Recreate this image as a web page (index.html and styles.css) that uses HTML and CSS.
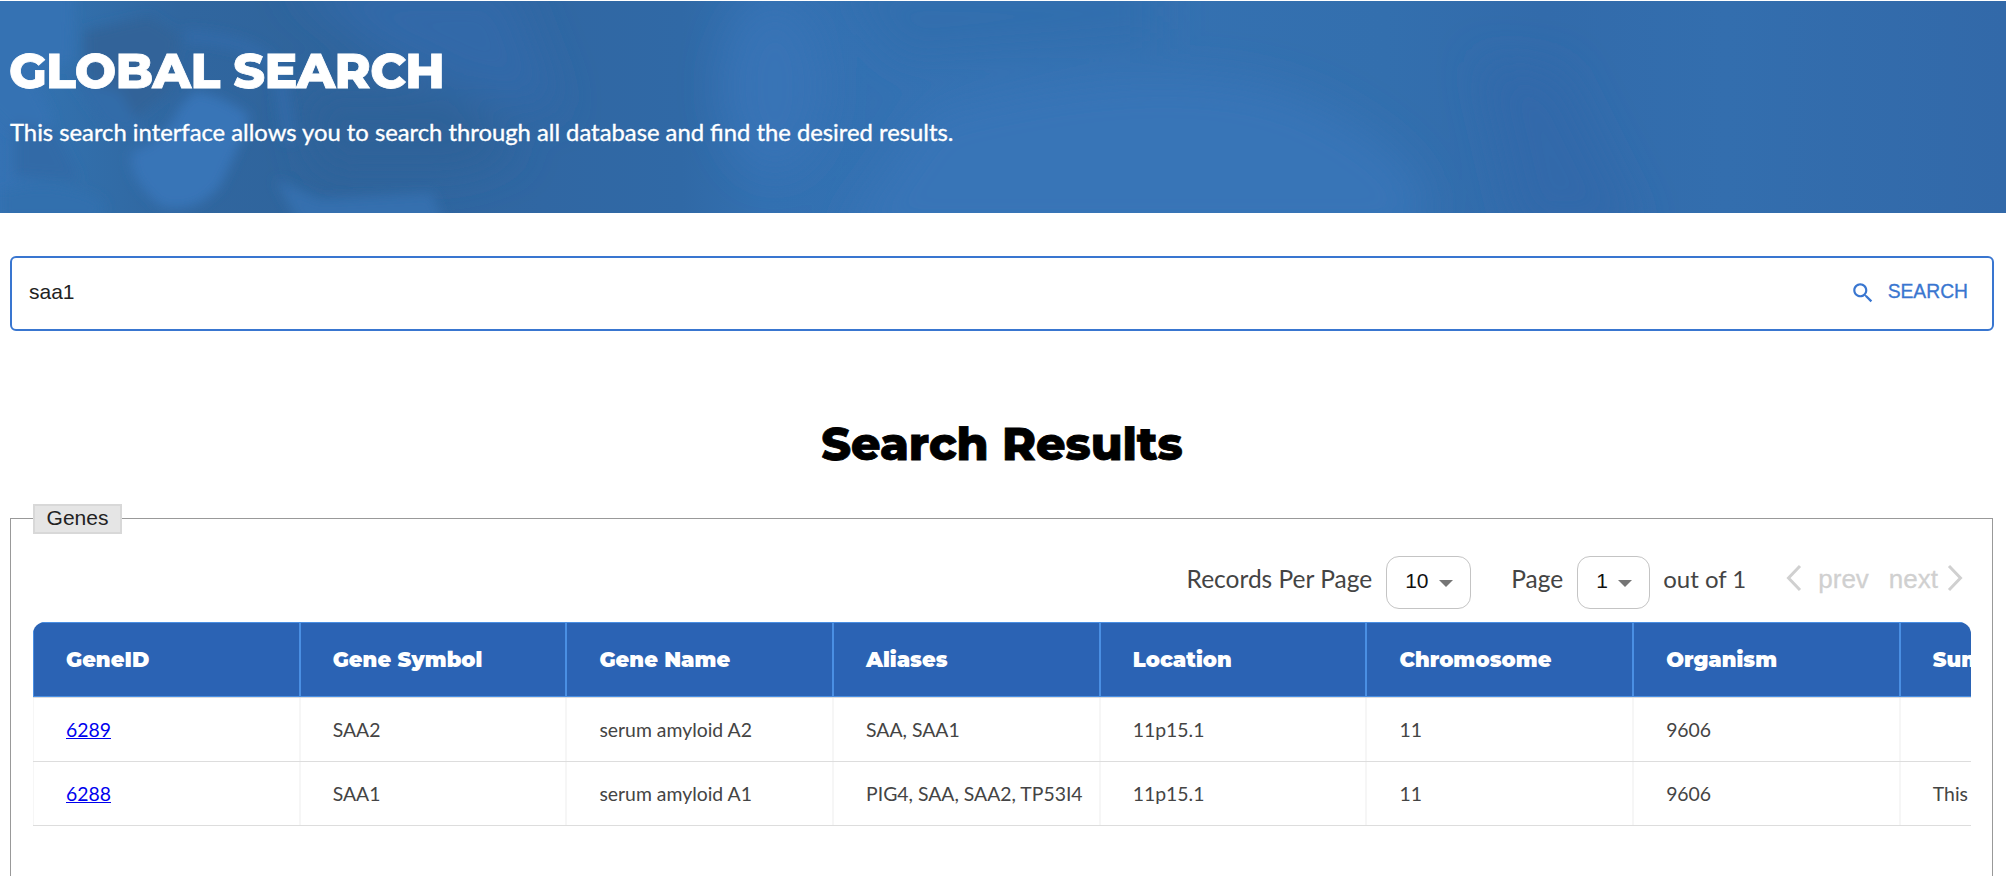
FILE: index.html
```html
<!DOCTYPE html>
<html lang="en">
<head>
<meta charset="utf-8">
<title>Global Search</title>
<link rel="stylesheet" href="styles.css">
</head>
<body>
<header class="banner">
  <svg class="banner-art" viewBox="0 0 2006 212" preserveAspectRatio="none" aria-hidden="true">
    <defs>
      <linearGradient id="base" x1="0" x2="1" y1="0" y2="0">
        <stop offset="0" stop-color="#3572b4"/><stop offset=".03" stop-color="#3270ad"/>
        <stop offset=".09" stop-color="#30669f"/><stop offset=".17" stop-color="#2f649c"/>
        <stop offset=".27" stop-color="#3067a3"/><stop offset=".34" stop-color="#3069a6"/>
        <stop offset=".38" stop-color="#3370b1"/><stop offset=".5" stop-color="#3572b3"/>
        <stop offset=".69" stop-color="#336fae"/><stop offset=".77" stop-color="#326bab"/>
        <stop offset=".86" stop-color="#336eae"/><stop offset="1" stop-color="#3269a9"/>
      </linearGradient>
      <filter id="soft" x="-50%" y="-50%" width="200%" height="200%"><feGaussianBlur stdDeviation="6"/></filter>
      <filter id="wide" x="-50%" y="-50%" width="200%" height="200%"><feGaussianBlur stdDeviation="20"/></filter>
    </defs>
    <rect width="2006" height="212" fill="url(#base)"/>
    <g filter="url(#wide)">
      <path d="M290-20H510L560 110 470 90 380 50Z" fill="#3269a9"/>
      <ellipse cx="775" cy="85" rx="50" ry="85" fill="#3773b6"/>
      <path d="M930 110Q1200 40 1330 110T1410 240H840Z" fill="#3774b7"/>
      <path d="M840-20H1160V40L900 60Z" fill="#336eae"/>
      <path d="M1480 60 1560 70 1640 230H1520Z" fill="#3169aa"/>
      <path d="M300 90H450L520 150 460 170H320Z" fill="#2e6299"/>
    </g>
    <g filter="url(#soft)">
      <path d="M-20-20H75L72 60 30 75 50 110 55 140 30 150-20 100Z" fill="#3572b3"/>
      <path d="M85 30 150 15 180 35 170 90 120 130 85 80Z" fill="#306399"/>
      <path d="M195 90Q225 95 250 115 240 145 220 185 195 215 160 205 125 175 132 150 165 140 180 105Z" fill="#3774b7"/>
      <path d="M70 75 120 90 145 135 105 125Z" fill="#336ca9"/>
      <path d="M185 35Q270 40 280 80L290 140" fill="none" stroke="#336ba9" stroke-width="12"/>
      <path d="M0 190Q40 178 80 190T95 220H0Z" fill="#3370ae"/>
      <path d="M275 178 320 198 380 195 432 192 445 225H300Z" fill="#3470af"/>
      <path d="M15 120 55 130 80 180 15 175Z" fill="#306aa7"/>
    </g>
  </svg>
  <h1 class="banner-title">GLOBAL SEARCH</h1>
  <p class="banner-text">This search interface allows you to search through all database and find the desired results.</p>
</header>

<main>
  <form class="search">
    <span class="search-value">saa1</span>
    <span class="search-button">
      <svg class="search-icon" viewBox="0 0 24 24" aria-hidden="true"><path fill="currentColor" d="M15.5 14h-.79l-.28-.27C15.41 12.59 16 11.11 16 9.5 16 5.91 13.09 3 9.5 3S3 5.91 3 9.5 5.91 16 9.5 16c1.61 0 3.09-.59 4.23-1.57l.27.28v.79l5 4.99L20.49 19l-4.99-5zm-6 0C7.01 14 5 11.99 5 9.5S7.01 5 9.5 5 14 7.01 14 9.5 11.99 14 9.5 14z"/></svg>
      <span class="search-label">SEARCH</span>
    </span>
  </form>

  <h2 class="results-title">Search Results</h2>

  <section class="genes">
    <div class="legend"><span>Genes</span></div>
    <div class="pager">
      <span class="per-page">Records Per Page</span>
      <span class="select select-size"><span>10</span><i class="caret"></i></span>
      <span class="page-word">Page</span>
      <span class="select select-page"><span>1</span><i class="caret"></i></span>
      <span class="total">out of 1</span>
      <span class="step prev"><svg class="chevron" viewBox="0 0 16 28"><path d="M14 2 2.5 14 14 26"/></svg><span>prev</span></span>
      <span class="step next"><span>next</span><svg class="chevron" viewBox="0 0 16 28"><path d="M2 2 13.500 14 2 26"/></svg></span>
    </div>
    <div class="table">
      <div class="row head"><div>GeneID</div><div>Gene Symbol</div><div>Gene Name</div><div>Aliases</div><div>Location</div><div>Chromosome</div><div>Organism</div><div>Summary</div></div>
      <div class="row"><div><a href="#">6289</a></div><div>SAA2</div><div>serum amyloid A2</div><div>SAA, SAA1</div><div>11p15.1</div><div>11</div><div>9606</div><div></div></div>
      <div class="row"><div><a href="#">6288</a></div><div>SAA1</div><div>serum amyloid A1</div><div>PIG4, SAA, SAA2, TP53I4</div><div>11p15.1</div><div>11</div><div>9606</div><div>This</div></div>
    </div>
  </section>
</main>
</body>
</html>
```

FILE: styles.css
```css
* { box-sizing: border-box; }
body {
  margin: 0;
  height: 876px;
  overflow: hidden;
  background: #fff;
  font-family: Lato, sans-serif;
  color: #444;
}

.banner {
  position: relative;
  height: 212px;
  margin-top: 1px;
  padding: 40px 10px 0 9px;
  overflow: hidden;
  color: #fff;
}
.banner-art { position: absolute; inset: 0; width: 100%; height: 100%; }
.banner-title {
  position: relative;
  margin: 0;
  font: 800 49px/60px Montserrat, Inter, sans-serif;
  letter-spacing: -0.650px;
  -webkit-text-stroke: 0.8px #fff;
  white-space: nowrap;
}
.banner-text {
  position: relative;
  margin: 16px 0 0 1px;
  font-size: 23.800px;
  line-height: 30px;
  -webkit-text-stroke: 0.35px #fff;
  white-space: nowrap;
}

main { padding: 43px 12px 0 10px; }
.search {
  display: flex;
  align-items: center;
  justify-content: space-between;
  width: 1984px;
  height: 75px;
  padding: 0 24px 4px 17px;
  border: 2px solid #3976d0;
  border-radius: 6px;
  font-family: "Liberation Sans", Arial, sans-serif;
}
.search-value { font-size: 21px; color: #222; }
.search-button { display: flex; align-items: center; gap: 12px; color: #3976d0; }
.search-icon { width: 26px; height: 26px; margin-top: 3px; }
.search-label { font-size: 19.300px; -webkit-text-stroke: 0.3px #3976d0; }

.results-title {
  margin: 83px 0 0;
  text-align: center;
  font: 800 46px/60px Montserrat, Inter, sans-serif;
  -webkit-text-stroke: 0.8px #000;
  color: #000;
}

.genes {
  width: 1983px;
  height: 400px;
  margin-top: 44px;
  padding: 0 21px 0 22px;
  border: 1px solid #999;
}
.legend {
  width: 89px;
  height: 30px;
  margin-top: -15px;
  border: 2px solid #d8d8d8;
  background: #e5e5e5;
  text-align: center;
  font: 21px/23px "Liberation Sans", Arial, sans-serif;
  color: #222;
}

.pager {
  display: flex;
  justify-content: flex-end;
  height: 53px;
  margin-top: 22px;
  padding-right: 8px;
  font-size: 24.500px;
  line-height: 46px;
  white-space: nowrap;
}
.select {
  display: flex;
  align-items: center;
  justify-content: space-between;
  height: 53px;
  padding: 0 17px 3px 18px;
  border: 1px solid #c4c4c4;
  border-radius: 13px;
  font: 21px/48px "Liberation Sans", Arial, sans-serif;
  color: #111;
}
.select-size { width: 85px; margin: 0 40px 0 14px; }
.select-page { width: 73px; margin: 0 13px 0 14px; }
.total { font-size: 24px; }
.caret {
  margin-top: 5px;
  border: 7px solid transparent;
  border-top-color: #757575;
  border-bottom: 0;
}
.step {
  display: flex;
  color: #d0d0d0;
  font: 26px/46px "Liberation Sans", Arial, sans-serif;
  -webkit-text-stroke: 0.3px #d0d0d0;
}
.prev { margin-left: 40px; gap: 16px; }
.next { margin-left: 20px; gap: 9px; }
.chevron {
  width: 16px;
  height: 28px;
  margin-top: 8px;
  fill: none;
  stroke: #d0d0d0;
  stroke-width: 3;
}

.table {
  width: 1938px;
  margin-top: 13px;
  overflow: hidden;
  border-radius: 12px 12px 0 0;
}
.row {
  display: grid;
  grid-template-columns: repeat(8, 266.700px);
  width: 2134px;
  height: 64px;
  border-bottom: 1px solid #ddd;
}
.row div {
  padding: 0 0 0 32px;
  border: solid #f6f6f6;
  border-width: 0 1px;
  font-size: 19.400px;
  line-height: 63px;
  white-space: nowrap;
}
.row a { color: #0000ee; }
.row.head { height: 76px; background: #2b63b4; }
.row.head div {
  border: 1px solid #4a8fe3;
  font: 900 21px/73px Montserrat, Inter, sans-serif;
  color: #fff;
}
```
